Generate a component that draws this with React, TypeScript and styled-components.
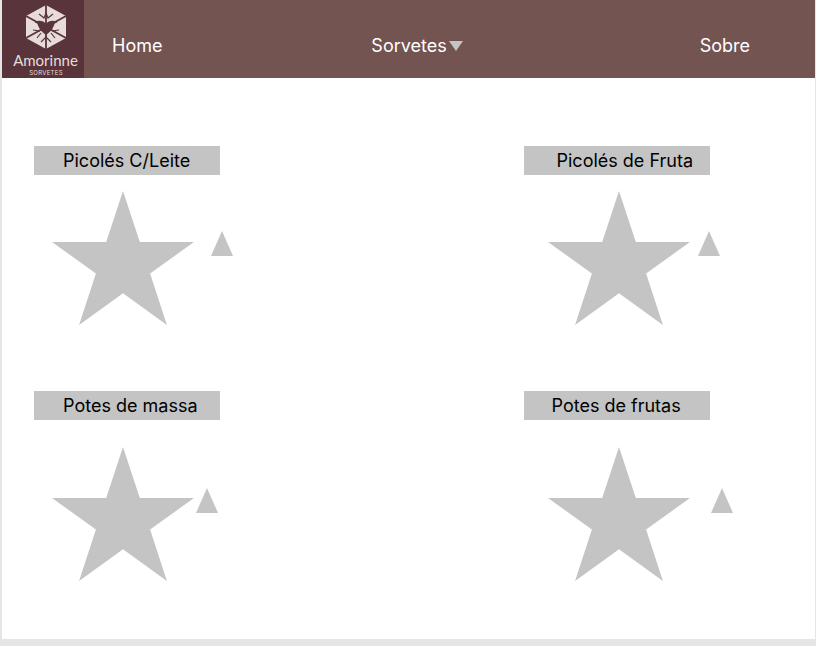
import React from 'react';
import styled, { createGlobalStyle } from 'styled-components';

const GlobalStyle = createGlobalStyle`
  html, body {
    margin: 0;
    background: #e5e5e5;
  }
  body {
    font-family: Inter, "Liberation Sans", sans-serif;
  }
`;

const Frame = styled.div`
  width: 813px;
  height: 639px;
  margin-left: 2px;
  background: #fff;
  overflow: hidden;
`;

const Header = styled.header`
  height: 78px;
  margin-left: -2px;
  width: 815px;
  display: flex;
  align-items: flex-start;
  background: #735451;
  color: #fff;
`;

const LogoBox = styled.div`
  width: 84px;
  height: 78px;
  flex: none;
  background: #59343a;
  display: flex;
  flex-direction: column;
  align-items: center;
  color: #e8dcd8;
`;

const LogoName = styled.span`
  font-family: Lato, sans-serif;
  font-size: 15px;
  line-height: 14px;
  margin: 4px 0 0 7px;
`;

const LogoSub = styled.span`
  font-size: 6px;
  line-height: 6px;
  margin: 3px 0 0 8px;
  letter-spacing: 0.3px;
`;

const Nav = styled.nav`
  flex: 1;
  display: flex;
  align-items: center;
  justify-content: space-between;
  padding: 35px 65px 0 28px;
  font-size: 18px;
  line-height: 22px;
`;

const NavDrop = styled.span`
  display: flex;
  align-items: center;
  gap: 2px;
  margin-right: 28px;
`;

const Grid = styled.main`
  display: grid;
  grid-template-columns: 489.5px 186px;
  grid-auto-rows: 245px;
  padding: 68px 0 0 32px;
`;

const Card = styled.section`
  display: flex;
  flex-direction: column;
  align-items: flex-start;
`;

const Label = styled.div<{ $indent: number }>`
  width: 186px;
  height: 29px;
  background: #c4c4c4;
  color: #000;
  font-size: 18px;
  line-height: 29px;
  white-space: nowrap;
  padding-left: ${p => p.$indent}px;
  box-sizing: border-box;
`;

const ShapeRow = styled.div<{ $top: number; $indent: number }>`
  display: flex;
  align-items: flex-start;
  margin-top: ${p => p.$top}px;
  margin-left: ${p => p.$indent}px;
`;

const Pointer = styled.svg<{ $left: number; $top: number }>`
  flex: none;
  margin-left: ${p => p.$left}px;
  margin-top: ${p => p.$top}px;
`;

const LogoMark = styled.svg`
  flex: none;
  margin: 5px 0 0 8px;
`;

const Logo = () => (
  <LogoMark width="40" height="44" viewBox="0 0 40 44">
    <polygon points="20,0 40,11 40,33 20,44 0,33 0,11" fill="#e8dcd8" />
    <g stroke="#59343a" fill="none">
      <path strokeWidth="1.8" d="M20 0V44M0 11L40 33M40 11L0 33" />
      <path strokeWidth="1.2" d="M13 9L18 13L20 8L22 13L27 9M9 17L14 19M31 17L26 19M7 25L14 26M33 25L26 26M11 33L15 28M29 33L25 28M15 37L20 32L25 37" />
    </g>
    <path d="M11 16Q17 15 20 19Q23 15 29 16Q28.5 24 20 30Q11.5 24 11 16Z" fill="#59343a" />
  </LogoMark>
);

const Star = () => (
  <svg width="142" height="134" viewBox="0 0 142 134">
    <polygon points="71,0 87.8,51 142,51 98.1,82.5 114.9,134 71,102.2 27.1,134 43.9,82.5 0,51 54.2,51" fill="#c4c4c4" />
  </svg>
);

const Triangle = ({ left, top }: { left: number; top: number }) => (
  <Pointer $left={left} $top={top} width="22" height="25" viewBox="0 0 22 25">
    <polygon points="11,0 22,25 0,25" fill="#c4c4c4" />
  </Pointer>
);

const CARDS = [
  { title: 'Picolés C/Leite', textIndent: 29, starIndent: 18, starTop: 16, triLeft: 17, triTop: 40 },
  { title: 'Picolés de Fruta', textIndent: 33, starIndent: 24.5, starTop: 16, triLeft: 8, triTop: 40 },
  { title: 'Potes de massa', textIndent: 29, starIndent: 18, starTop: 27, triLeft: 2, triTop: 41 },
  { title: 'Potes de frutas', textIndent: 28, starIndent: 24.5, starTop: 27, triLeft: 21, triTop: 41 },
];

export default function App() {
  return (
    <>
      <GlobalStyle />
      <Frame>
        <Header>
          <LogoBox>
            <Logo />
            <LogoName>Amorinne</LogoName>
            <LogoSub>SORVETES</LogoSub>
          </LogoBox>
          <Nav>
            <span>Home</span>
            <NavDrop>
              Sorvetes
              <svg width="14" height="10" viewBox="0 0 14 10">
                <polygon points="0,0 14,0 7,10" fill="#c4c4c4" />
              </svg>
            </NavDrop>
            <span>Sobre</span>
          </Nav>
        </Header>
        <Grid>
          {CARDS.map(card => (
            <Card key={card.title}>
              <Label $indent={card.textIndent}>{card.title}</Label>
              <ShapeRow $top={card.starTop} $indent={card.starIndent}>
                <Star />
                <Triangle left={card.triLeft} top={card.triTop} />
              </ShapeRow>
            </Card>
          ))}
        </Grid>
      </Frame>
    </>
  );
}
